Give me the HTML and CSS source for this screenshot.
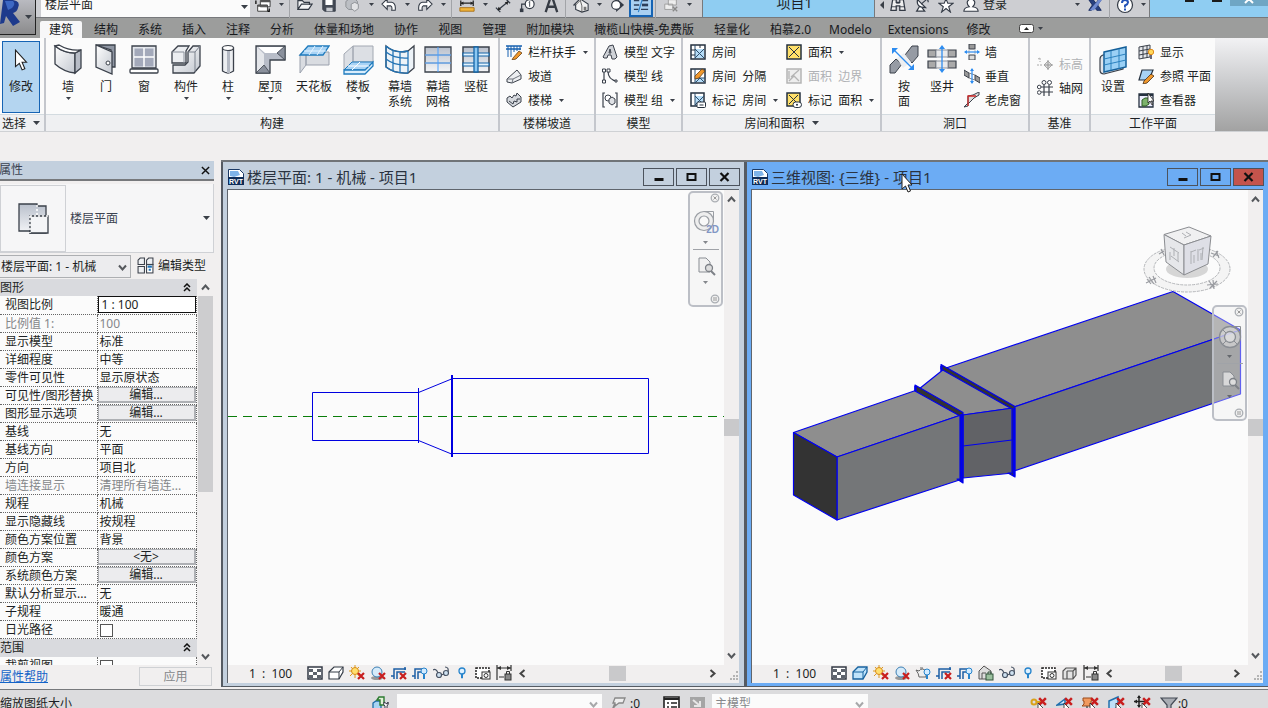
FILE: index.html
```html
<!DOCTYPE html>
<html lang="zh-CN">
<head>
<meta charset="utf-8">
<title>项目1</title>
<link rel="stylesheet" href="styles.css">
</head>
<body>
<svg class="defs" aria-hidden="true">
  <defs>
    <linearGradient id="gl" x1="0" y1="0" x2="1" y2="1"><stop offset="0" stop-color="#fff"/><stop offset="1" stop-color="#c3c8d0"/></linearGradient>
    <linearGradient id="gs" x1="0" y1="0" x2="0" y2="1"><stop offset="0" stop-color="#b9c0cc"/><stop offset="1" stop-color="#f4f5f7"/></linearGradient>
  </defs>
  <symbol id="dn" viewBox="0 0 7 4"><path d="M0 0h7L3.500 4z" fill="#3a3f47"/></symbol>
  <symbol id="chev" viewBox="0 0 9 9"><path d="M1 2.500l3.500 4 3.500-4" fill="none" stroke="#55585c" stroke-width="2"/></symbol>
  <symbol id="chevup" viewBox="0 0 9 9"><path d="M1 6.500l3.500-4 3.500 4" fill="none" stroke="#55585c" stroke-width="2"/></symbol>
  <symbol id="chevl" viewBox="0 0 9 9"><path d="M6.500 1l-4 3.500 4 3.500" fill="none" stroke="#444" stroke-width="2"/></symbol>
  <symbol id="chevr" viewBox="0 0 9 9"><path d="M2.500 1l4 3.500-4 3.500" fill="none" stroke="#444" stroke-width="2"/></symbol>
  <symbol id="dbl" viewBox="0 0 8 9"><path d="M1 4l3-3 3 3M1 8l3-3 3 3" fill="none" stroke="#111" stroke-width="1.500"/></symbol>
  <symbol id="ptr" viewBox="0 0 12 20"><path d="M1 1v15l3.500-3 2.500 6 2.500-1-2.500-6h4z" fill="#fff" stroke="#222" stroke-width="1"/></symbol>
  <symbol id="redx" viewBox="0 0 8 8"><path d="M1 1l6 6M7 1l-6 6" stroke="#c81e1e" stroke-width="2.200"/></symbol>

  <symbol id="b-wall" viewBox="0 0 32 32"><path d="M3 3q9 7 20 7v20q-11-1-20-9z" fill="url(#gl)" stroke="#3b414b" stroke-width="1.300"/><path d="M23 10l6-3v18l-6 5z" fill="#b7bcc6" stroke="#3b414b" stroke-width="1.300"/><path d="M3 3l4-1q10 6 22 5l-6 3Q12 10 3 3z" fill="#fff" stroke="#3b414b" stroke-width="1.300"/></symbol>
  <symbol id="b-door" viewBox="0 0 32 32"><path d="M6 2h19v22h-4V7z" fill="#8f96a3" stroke="#3b414b" stroke-width="1.300"/><path d="M6 2l16 7v22L6 24z" fill="url(#gl)" stroke="#3b414b" stroke-width="1.300"/><circle cx="18" cy="20" r="2" fill="#fff" stroke="#3b414b"/></symbol>
  <symbol id="b-window" viewBox="0 0 32 32"><path d="M4 3h24v22H4z" fill="#e4e7ec" stroke="#3b414b" stroke-width="1.300"/><path d="M6.500 5.500h19v18h-19z" fill="#a3a9ba"/><path d="M16 5v19M6 14h20" stroke="#fff" stroke-width="1.500"/><rect x="2" y="26" width="28" height="4" rx="1" fill="#fff" stroke="#3b414b" stroke-width="1.300"/></symbol>
  <symbol id="b-comp" viewBox="0 0 32 32"><path d="M2 9l6-6h11l-3 5v12H2z" fill="#eceef1" stroke="#3b414b" stroke-width="1.300"/><path d="M2 9h12v11" fill="none" stroke="#8a909a"/><path d="M3 22h12l3-3V9l5-6h7v20l-6 7H3z" fill="url(#gl)" stroke="#3b414b" stroke-width="1.300"/><path d="M18 9h7l5-6M25 9v20" fill="none" stroke="#7b818c"/></symbol>
  <symbol id="b-column" viewBox="0 0 32 32"><path d="M10.500 5v23q5.500 4 11 0V5z" fill="#eceef1" stroke="#3b414b" stroke-width="1.300"/><path d="M15 7h3v23h-3z" fill="#b4b9c3"/><ellipse cx="16" cy="5" rx="5.500" ry="2.500" fill="#fff" stroke="#3b414b" stroke-width="1.200"/></symbol>
  <symbol id="b-roof" viewBox="0 0 32 32"><path d="M2 3h29v14H16v13H2z" fill="#b8bdc8" stroke="#3b414b" stroke-width="1.300"/><path d="M3 4l7 7v12l-7 6z" fill="#e4e6ea"/><path d="M4 4l7 6h13l6-6z" fill="#fff"/><path d="M23 10l8-7v14zM10 22l6 8H2z" fill="#8a909c" stroke="#3b414b" stroke-width=".8"/></symbol>
  <symbol id="b-ceil" viewBox="0 0 32 32"><path d="M2 11v19l6-8V11zM8 9h23v13H8z" fill="#d9dce1" stroke="#9aa1ad"/><path d="M10 3h21l-6 9H2z" fill="#a8d3f5" stroke="#1f7bbd" stroke-width="1.300"/><path d="M6 8h22M17 3l-6 9M25 3l-6 9" fill="none" stroke="#e6f4ff"/></symbol>
  <symbol id="b-floor" viewBox="0 0 32 32"><path d="M2 11l9-8v16l-9 8zM11 3h20v16H11z" fill="#dcdfe4" stroke="#a2a8b2"/><path d="M10 19h21l-8 8H2z" fill="#a8d3f5" stroke="#1f7bbd"/><path d="M2 27h21l8-8v4l-8 8H2z" fill="#d9edfc" stroke="#1f7bbd" stroke-width="1.300"/><path d="M6 23h21M18 19l-8 8" stroke="#fff"/></symbol>
  <symbol id="b-csys" viewBox="0 0 32 32"><path d="M2 3q9 8 22 5l6-5v22l-6 5Q11 31 2 24z" fill="#edf3f8" stroke="#3b414b" stroke-width="1.300"/><path d="M2 9q9 7 22 6M2 16q9 7 22 6M9 7v21M16 8v21M24 8v22M2 3v21q9 7 22 6M2 3q9 8 22 5" fill="none" stroke="#2273b5" stroke-width="1.300"/></symbol>
  <symbol id="b-cgrid" viewBox="0 0 32 32"><path d="M3 4h26v25H3z" fill="url(#gs)" stroke="#3b414b" stroke-width="1.300"/><path d="M3 12h26M3 20h26" stroke="#8a909a"/><path d="M16 4v25M3 20h26M3 12h26" stroke="#4ba0ff"/></symbol>
  <symbol id="b-mull" viewBox="0 0 32 32"><path d="M3 4h26v25H3z" fill="url(#gs)" stroke="#3b414b" stroke-width="1.500"/><path d="M3 10h26v3H3zM3 20h26v3H3z" fill="#e4f3fd" stroke="#1465a8" stroke-width="1.200"/><path d="M14 4h4v25h-4z" fill="#8cc8f2" stroke="#1465a8" stroke-width="1.300"/></symbol>
  <symbol id="b-face" viewBox="0 0 32 32"><path d="M2 22l6-6 6 5-7 9H2zM17 12l7-9h6v10l-6 7z" fill="#969ba4" stroke="#3b414b"/><path d="M9 15l7-5 7 9-8 6z" fill="#eeeff1"/><path d="M6 7l18 18" stroke="#2d8cf0" stroke-width="1.300"/><path d="M4 5h6l-6 6zM26 27h-6l6-6z" fill="#2d8cf0"/></symbol>
  <symbol id="b-shaft" viewBox="0 0 32 32"><path d="M2 7h8v7H2zM22 7h8v7h-8zM2 18h8v7H2zM22 18h8v7h-8z" fill="#aaa" stroke="#3b414b" stroke-width="1.200"/><path d="M10 7h12v7H10zM10 18h12v7H10z" fill="#e9eaec" stroke="#8d939d"/><path d="M16 4v24" stroke="#2d8cf0" stroke-width="1.300"/><path d="M13 6l3-4 3 4zM13 26l3 4 3-4z" fill="#2d8cf0"/></symbol>
  <symbol id="b-set" viewBox="0 0 32 32"><path d="M3 16q0-3 3-4l20-4v18L7 31q-4 0-4-4z" fill="#e2e5ea" stroke="#3b414b" stroke-width="1.200"/><path d="M7 9l22-5v20L7 29z" fill="#9ad0f5" stroke="#145f99" stroke-width="1.500"/><path d="M14 8v19M22 6v20M7 16l22-5M7 22l22-5" stroke="#2b82bf"/></symbol>

  <symbol id="s-rail" viewBox="0 0 16 16"><path d="M0 2h16M0 5h15" stroke="#1761b0" stroke-width="1.300"/><path d="M2 2v11M5 2v11M8 2v6M11 2v5M14 2v4" stroke="#1761b0"/><path d="M7 14l6-7 3 2-6 6-4 1z" fill="#f0982c" stroke="#664018" stroke-width=".8"/></symbol>
  <symbol id="s-ramp" viewBox="0 0 16 16"><path d="M1 11l10-9 4 5v4l-9 4-5-1z" fill="#eceef1" stroke="#3b414b"/><path d="M6 15l1-4 8-4M1 11h6" fill="none" stroke="#70757e"/></symbol>
  <symbol id="s-stair" viewBox="0 0 16 16"><path d="M1 6l3-2 2 2 2-3 2 1 1-3 4 4v5l-8 5-6-5z" fill="#d5d8dd" stroke="#3b414b"/><path d="M3 9l4 3 1-3 3 1V7h3" fill="none" stroke="#3b414b"/></symbol>
  <symbol id="s-mtext" viewBox="0 0 16 16"><path d="M1 13L7 2l4-1 4 12-2 2h-3l-1-4H6l-1 3H2zM7 9h2L8 5z" fill="#cfd2d7" stroke="#3b414b"/></symbol>
  <symbol id="s-mline" viewBox="0 0 16 16"><path d="M2 3v11M6 3q0 9 9 10" fill="none" stroke="#3b414b" stroke-width="1.200"/><path d="M.5 1h3v3h-3zM.5 12h3v3h-3zM5 1h3v3H5zM13 12h2v2h-2z" fill="#fff" stroke="#3b414b"/></symbol>
  <symbol id="s-mgroup" viewBox="0 0 16 16"><path d="M3 1H1v14h2M13 1h2v14h-2" fill="none" stroke="#3b414b" stroke-width="1.200"/><circle cx="6" cy="6" r="3" fill="#fff" stroke="#3b414b"/><path d="M7 7l3-2 3 2v4l-3 2-3-2z" fill="#dfe1e5" stroke="#3b414b"/></symbol>
  <symbol id="s-room" viewBox="0 0 16 16"><path d="M1 1h14v14H1z" fill="#fff" stroke="#25313f" stroke-width="1.500"/><path d="M5 5h9v9H5z" fill="#b5dcf7"/><path d="M5 5l9 9M14 5l-9 9M5 1v14" stroke="#2f4f6d"/><path d="M1 6h4M1 11h4M10 1v3" stroke="#25313f"/></symbol>
  <symbol id="s-roomsep" viewBox="0 0 16 16"><path d="M1 1h14v14H1z" fill="#fff" stroke="#25313f" stroke-width="1.500"/><path d="M5 10h9v4H5z" fill="#b5dcf7"/><path d="M5 1v14M5 10h10M5 15l5-5 5 5" stroke="#2f4f6d" fill="none"/><path d="M5 8l7-7 3 2-6 7-4 1z" fill="#f0982c" stroke="#664018" stroke-width=".8"/></symbol>
  <symbol id="s-roomtag" viewBox="0 0 16 16"><path d="M1 1h13v13H1z" fill="#fff" stroke="#25313f" stroke-width="1.500"/><path d="M5 4h8v9H5z" fill="#b5dcf7"/><path d="M5 4l9 9M14 4l-9 9M5 1v13" stroke="#2f4f6d"/><rect x="7" y="10" width="8.500" height="5.500" rx="1" fill="#fff" stroke="#25313f"/><path d="M9.500 13h4" stroke="#25313f"/></symbol>
  <symbol id="s-area" viewBox="0 0 16 16"><path d="M1 1h14v14H1z" fill="#ffe069" stroke="#25313f" stroke-width="1.500"/><path d="M3 3l10 10M13 3L3 13" stroke="#25313f"/></symbol>
  <symbol id="s-areab" viewBox="0 0 16 16"><path d="M1 1h14v14H1z" fill="#eee" stroke="#b5b5b5" stroke-width="1.500"/><path d="M3 13l5-5 5 5M5 9l8-7M3 3v8" fill="none" stroke="#b5b5b5" stroke-width="1.300"/></symbol>
  <symbol id="s-areatag" viewBox="0 0 16 16"><path d="M1 1h13v13H1z" fill="#ffe069" stroke="#25313f" stroke-width="1.500"/><path d="M3 3l9 9M12 3l-9 9" stroke="#25313f"/><rect x="7" y="10" width="8.500" height="5.500" rx="2.700" fill="#fff" stroke="#25313f"/><circle cx="11" cy="12.700" r="1" fill="#25313f"/></symbol>
  <symbol id="s-owall" viewBox="0 0 16 16"><path d="M5 0h6v5H5z" fill="#999" stroke="#3b414b"/><path d="M5 11h6v5H5z" fill="#ddd" stroke="#3b414b"/><path d="M5 5v6M11 5v6" stroke="#bbb"/><path d="M1 8h14" stroke="#2d8cf0" stroke-width="1.200"/><path d="M3 6L0 8l3 2zM13 6l3 2-3 2z" fill="#2d8cf0"/></symbol>
  <symbol id="s-overt" viewBox="0 0 16 16"><path d="M0 2l5 3v5L0 7zM11 7l5 3v5l-5-3z" fill="#999" stroke="#3b414b"/><path d="M5 5l6 2M5 10l6 2" stroke="#888"/><path d="M8 1v14" stroke="#2d8cf0" stroke-width="1.200"/><path d="M6 3l2-3 2 3zM6 13l2 3 2-3z" fill="#2d8cf0"/></symbol>
  <symbol id="s-dormer" viewBox="0 0 16 16"><path d="M0 15l4-4V4l5-1 6-3v3l-5 3-6 6v2z" fill="#ddd" stroke="#3b414b"/><path d="M4 14V4h8" fill="none" stroke="#d02a2a" stroke-width="1.300"/></symbol>
  <symbol id="s-level" viewBox="0 0 16 16"><path d="M0 9h6M3 2v4M1 3l2-1" fill="none" stroke="#aaa" stroke-dasharray="2 1"/><path d="M7 9l4-4 4 4-4 4z" fill="#ddd" stroke="#aaa"/><path d="M11 4v10M7 9h9" stroke="#999"/></symbol>
  <symbol id="s-grid" viewBox="0 0 16 16"><path d="M4 7h12M4 12h12M7 5v11M12 5v11" stroke="#3b414b" stroke-width="1.200"/><circle cx="7" cy="2.500" r="2" fill="#fff" stroke="#3b414b"/><circle cx="12.500" cy="2.500" r="2" fill="#fff" stroke="#3b414b"/><circle cx="2.200" cy="7" r="1.800" fill="#fff" stroke="#3b414b"/><circle cx="2.200" cy="12.500" r="1.800" fill="#fff" stroke="#3b414b"/></symbol>
  <symbol id="s-show" viewBox="0 0 16 16"><path d="M1 3l11-2v12l-11 2zM5 2v12M9 2v12M1 7l11-2M1 11l11-2" fill="#e5e7ea" stroke="#3b414b"/><circle cx="13" cy="8" r="2.700" fill="#ffd85a" stroke="#e08a1c"/><path d="M12 11h2v4h-2z" fill="#667"/></symbol>
  <symbol id="s-ref" viewBox="0 0 16 16"><path d="M4 2h11l-4 10H1z" fill="#a8d3f5" stroke="#25313f" stroke-width="1.200"/><path d="M6 13l7-7 3 2-7 7-4 1z" fill="#f0982c" stroke="#4a3018" stroke-width=".8"/></symbol>
  <symbol id="s-viewer" viewBox="0 0 16 16"><path d="M1 2h14v13H1z" fill="#eef" stroke="#25313f" stroke-width="1.300"/><path d="M1 2h14v2H1z" fill="#25313f"/><path d="M4 8l3-2h4v6l-3 2H4z" fill="#7cb36b" stroke="#2e5d24"/><path d="M10 1v10l2-2 2 4 1-1-2-3h3z" fill="#fff" stroke="#222" stroke-width=".8"/></symbol>

  <symbol id="q-win" viewBox="0 0 18 18"><path d="M6 4h11v7H6zM3 9h11v7H3z" fill="#fff" stroke="#333"/><path d="M6 4h11v2H6zM3 9h11v2H3z" fill="#555"/><path d="M1 4v4M16 13v3h-2" stroke="#111" stroke-width="1.500" fill="none"/></symbol>
  <symbol id="q-open" viewBox="0 0 18 18"><path d="M1 14V4h5l2 2h6v3M1 14l4-6h12l-4 6z" fill="#f3f4f6" stroke="#333a45" stroke-width="1.300"/></symbol>
  <symbol id="q-save" viewBox="0 0 18 18"><path d="M2 2h14v14H4l-2-2z" fill="#454b56" stroke="#333a45"/><path d="M5 2h8v7H5z" fill="#fff"/><path d="M6 12h7v4H6z" fill="#c9ccd2"/></symbol>
  <symbol id="q-sync" viewBox="0 0 18 18"><path d="M1 5l4-3h6l3 3v6l-4 3H4l-3-3z" fill="#bcbfc4" stroke="#8a8d92"/><path d="M7 8l4-2 4 2v5l-4 3-4-3z" fill="#e2e3e5" stroke="#8a8d92"/></symbol>
  <symbol id="q-undo" viewBox="0 0 18 18"><path d="M1 8l6-6v4h5q5 1 4 9h-4q1-4-1-5H7v4z" fill="#fff" stroke="#333a45" stroke-width="1.200"/></symbol>
  <symbol id="q-redo" viewBox="0 0 18 18"><path d="M17 8l-6-6v4H6q-5 1-4 9h4q-1-4 1-5h4v4z" fill="#fff" stroke="#333a45" stroke-width="1.200"/></symbol>
  <symbol id="q-meas" viewBox="0 0 18 18"><path d="M2 7h14M2 4v6M16 4v6" stroke="#222" stroke-width="1.400"/><path d="M2 7l3-2v4zM16 7l-3-2v4z" fill="#222"/><path d="M1 12h16v4H1z" fill="#f2b53b" stroke="#a86e13"/></symbol>
  <symbol id="q-dim" viewBox="0 0 18 18"><path d="M3 15L15 5M1 12l5 5M12 2l5 5" stroke="#333a45" stroke-width="1.400"/><path d="M3 15l1-4 3 3zM15 5l-4 1 3 3z" fill="#222"/></symbol>
  <symbol id="q-tag" viewBox="0 0 18 18"><path d="M7 8H3v6" fill="none" stroke="#333a45" stroke-width="1.300"/><path d="M1 13h4v4H1z" fill="#333a45"/><circle cx="12" cy="8" r="5" fill="#fff" stroke="#333a45" stroke-width="1.300"/><path d="M11 6l1-1v6" fill="none" stroke="#333a45"/></symbol>
  <symbol id="q-a" viewBox="0 0 18 18"><path d="M3 17L8 2h3l5 15M6 11h7" fill="none" stroke="#363b44" stroke-width="2.600"/></symbol>
  <symbol id="q-home" viewBox="0 0 18 18"><path d="M1 9l7-7 9 6v7l-7 2-7-3V9z" fill="#f1f1f1" stroke="#333a45" stroke-width="1.200"/><path d="M8 3l2 7v7M3 9l5-5" stroke="#555" fill="none"/><path d="M12 11h3v4h-3z" fill="#777"/></symbol>
  <symbol id="q-sec" viewBox="0 0 18 18"><path d="M8 1l9 8-9 8z" fill="#333a45"/><circle cx="8" cy="9" r="5" fill="#fff" stroke="#333a45" stroke-width="1.300"/></symbol>
  <symbol id="q-thin" viewBox="0 0 18 18"><path d="M1 4h6M10 4h7M1 9h6M1 14h5M9 14h8" stroke="#2c3e5a" stroke-width="1.500"/><path d="M11 1L6 17" stroke="#2f82c9" stroke-width="1.300"/><path d="M10 9h7" stroke="#2c3e5a" stroke-width="3"/></symbol>
  <symbol id="q-sw" viewBox="0 0 18 18"><path d="M6 3h9v6H6zM2 8h9v6H2z" fill="#eee" stroke="#999"/><path d="M11 11l5 5M16 11l-5 5" stroke="#888" stroke-width="1.500"/></symbol>
  <symbol id="q-bin" viewBox="0 0 18 18"><path d="M3 3h4v3h4V3h4l2 12h-6v-5H7v5H1z" fill="#f0f0f0" stroke="#333a45" stroke-width="1.400"/><path d="M7 7h4M2 11h5M11 11h5" stroke="#333a45"/></symbol>
  <symbol id="q-sat" viewBox="0 0 18 18"><path d="M4 3q-2 9 9 9zM6 11l-3 5h9l-3-4" fill="#fff" stroke="#333a45" stroke-width="1.400"/><path d="M8 8l6-5M12 1q4 1 4 5" fill="none" stroke="#333a45" stroke-width="1.300"/></symbol>
  <symbol id="q-star" viewBox="0 0 18 18"><path d="M9 2l2 5h6l-5 4 2 6-5-4-5 4 2-6-5-4h6z" fill="#fff" stroke="#333a45" stroke-width="1.200"/></symbol>
  <symbol id="q-user" viewBox="0 0 18 18"><path d="M1 16q0-4 6-5-3-3-2-6 4-6 8 0 1 3-2 6 6 1 6 5z" fill="#fff" stroke="#333a45" stroke-width="1.300"/></symbol>
  <symbol id="q-x" viewBox="0 0 18 18"><path d="M2 3h5l3 4 3-4h3l-4 6 4 6h-5l-3-4-3 4H2l4-6z" fill="#27407f" stroke="#13265c"/><path d="M13 3h4L8 15H3z" fill="#6f8ad0"/></symbol>
  <symbol id="q-help" viewBox="0 0 18 18"><circle cx="9" cy="9" r="7.500" fill="#fff" stroke="#333a45" stroke-width="1.200"/><path d="M6 7q0-3 3-3t3 2.500q0 1.500-3 3v2M9 12.500v2" fill="none" stroke="#2454b8" stroke-width="2"/></symbol>

  <symbol id="v-detail" viewBox="0 0 16 16"><path d="M1 2h14v12H1z" fill="#fff" stroke="#333a45" stroke-width="1.500"/><path d="M2 4h4v3H2zM10 4h4v3h-4zM6 7h4v3H6zM2 10h4v3H2zM10 10h4v3h-4z" fill="#5c626c"/></symbol>
  <symbol id="v-box" viewBox="0 0 16 16"><path d="M1 7l5-5h9v5l-4 7H1z" fill="#fff" stroke="#333a45" stroke-width="1.200"/><path d="M1 7h10v7M11 7l4-5" fill="none" stroke="#333a45"/></symbol>
  <symbol id="v-boxb" viewBox="0 0 16 16"><path d="M1 7l5-5h9v5l-4 7H1z" fill="#bfe3fb" stroke="#17629e" stroke-width="1.300"/><path d="M1 7h10v7M11 7l4-5" fill="none" stroke="#17629e"/></symbol>
  <symbol id="v-sun" viewBox="0 0 16 16"><path d="M6 0v13M0 6h12M2 2l8 9M10 2l-9 9" stroke="#dd9a1f"/><circle cx="6" cy="6" r="3.500" fill="#ffdf6e" stroke="#d98c1a"/><use href="#redx" x="8" y="7" width="8" height="8"/></symbol>
  <symbol id="v-shadow" viewBox="0 0 16 16"><ellipse cx="7" cy="13" rx="6" ry="2" fill="#999"/><circle cx="7" cy="7" r="5" fill="#d6ebfa" stroke="#3d7fb3"/><use href="#redx" x="8" y="7" width="8" height="8"/></symbol>
  <symbol id="v-render" viewBox="0 0 16 16"><path d="M1 5l3 1q3-4 7 0v6H4Q4 9 1 5M5 3h3" fill="#eee" stroke="#666"/><circle cx="12" cy="7" r="3" fill="#d3ebff" stroke="#2784cc"/><path d="M12 10v4" stroke="#2784cc" stroke-width="2"/></symbol>
  <symbol id="v-crop" viewBox="0 0 16 16"><path d="M3 14V4h12M0 11h3M6 14V7h8M14 2v3" fill="none" stroke="#1c5fa5" stroke-width="1.500"/><use href="#redx" x="8" y="7" width="8" height="8"/></symbol>
  <symbol id="v-crops" viewBox="0 0 16 16"><path d="M3 14V4h8M0 11h3M6 14V7h3" fill="none" stroke="#1c5fa5" stroke-width="1.500"/><circle cx="12" cy="6" r="3" fill="#d3ebff" stroke="#2784cc"/><path d="M12 9v5" stroke="#2784cc" stroke-width="2"/></symbol>
  <symbol id="v-lock" viewBox="0 0 16 16"><path d="M1 14V6l5-5 7 5v8z" fill="#ddd" stroke="#555"/><path d="M4 14V8h4" fill="none" stroke="#555"/><rect x="8" y="9" width="7" height="6" fill="#9bc09e" stroke="#30523a"/><path d="M10 9V7h3v2" fill="none" stroke="#30523a"/></symbol>
  <symbol id="v-glass" viewBox="0 0 16 16"><path d="M0 5q3-2 5 3M12 2q4 0 3 5M8 10l3-1" fill="none" stroke="#475263" stroke-width="1.200"/><circle cx="6" cy="10" r="2.500" fill="#cfe1f0" stroke="#475263" stroke-width="1.200"/><circle cx="13" cy="8" r="2.500" fill="#cfe1f0" stroke="#475263" stroke-width="1.200"/></symbol>
  <symbol id="v-bulb" viewBox="0 0 16 16"><circle cx="8" cy="6" r="3" fill="#dff1ff" stroke="#2784cc" stroke-width="1.300"/><path d="M7.500 9h1v4h-1z" fill="#8bc0e8" stroke="#2784cc"/></symbol>
  <symbol id="v-temp" viewBox="0 0 16 16"><rect x="1" y="3" width="13" height="10" fill="#fff" stroke="#222" stroke-width="1.500" stroke-dasharray="2 1"/><rect x="7" y="7" width="8" height="7" fill="#fff" stroke="#333"/><circle cx="11" cy="10.500" r="2" fill="none" stroke="#333"/></symbol>
  <symbol id="v-disp" viewBox="0 0 16 16"><path d="M1 6l3-3h10v7l-3 4H1zM5 6h6v8M11 6l3-3M5 6v8" fill="#e3e3e3" stroke="#555" stroke-width="1.200"/></symbol>
  <symbol id="v-cons" viewBox="0 0 16 16"><path d="M1 0v15M15 0v6M1 3h14M3 12h5" stroke="#333" stroke-width="1.200" fill="none"/><path d="M1 3l4-2v4zM15 3l-4-2v4z" fill="#333"/><rect x="9" y="9" width="6" height="6" fill="#888" stroke="#333"/><path d="M10.500 9V6.500h3V9" fill="none" stroke="#333"/></symbol>
  <symbol id="rvt" viewBox="0 0 16 16"><path d="M.5 .5h11l4 4v11H.5z" fill="#fff" stroke="#1b3a66"/><path d="M2 2h8l2 4-6 2-4-1z" fill="#7fb3e8"/><path d="M0 8h16v8H0z" fill="#0f2c57"/><text x="8" y="15" text-anchor="middle" class="rvt-text">RVT</text></symbol>
  <symbol id="n-zoom" viewBox="0 0 20 20"><path d="M3 2h7l4 4v10H3z" fill="#eee" fill-opacity=".7" stroke="#898d93"/><circle cx="13" cy="12" r="3.500" fill="#ddd" stroke="#7d8187" stroke-width="1.300"/><path d="M15 15l4 4" stroke="#7d8187" stroke-width="2"/></symbol>
  <symbol id="n-wheel" viewBox="0 0 26 26"><circle cx="13" cy="13" r="10.500" fill="#ddd" fill-opacity=".6" stroke="#898d93" stroke-width="1.300"/><path d="M14 2.500h9.500V13" fill="none" stroke="#898d93"/><circle cx="13" cy="13" r="5.500" fill="#eee" fill-opacity=".5" stroke="#898d93" stroke-width="1.300"/><path d="M6 20l3-3M20 20l-3-3M6 6l3 3" stroke="#898d93"/></symbol>
  <symbol id="n-close" viewBox="0 0 10 10"><circle cx="5" cy="5" r="3.800" fill="#eee" fill-opacity=".6" stroke="#aaaeb3" stroke-width="1.300"/><path d="M3.500 3.500l3 3M6.500 3.500l-3 3" stroke="#999"/></symbol>
  <symbol id="n-opt" viewBox="0 0 10 10"><circle cx="5" cy="5" r="3.800" fill="#eee" fill-opacity=".6" stroke="#aaaeb3" stroke-width="1.300"/><path d="M3 4h4M3 6h4" stroke="#999"/></symbol>
  <symbol id="grip" viewBox="0 0 10 10"><path d="M7 0h2v2H7zM4 4h2v2H4zM7 4h2v2H7zM1 7h2v2H1zM4 7h2v2H4zM7 7h2v2H7z" fill="#b4b4b4"/></symbol>

  <symbol id="t-ws" viewBox="0 0 18 18"><path d="M1 8l3-2h5v8l-2 2H1z" fill="#a7d4f4" stroke="#1c6ca8" stroke-width="1.300"/><path d="M5 5l2-3h5v8H8V5z" fill="#e3f0d9" stroke="#2c7b31" stroke-width="1.400"/><path d="M12 7q-1 3 1 4v5h2v-5q2-2 1-4l-1 2z" fill="#fff" stroke="#334"/></symbol>
  <symbol id="t-req" viewBox="0 0 18 18"><path d="M5 3h10l-2 5H9l-4 3V8H3z" fill="#eee" stroke="#888" stroke-width="1.300"/><path d="M5 9l-3 7" stroke="#888" stroke-width="2"/></symbol>
  <symbol id="t-opt" viewBox="0 0 18 18"><path d="M1 2h15v14H1z" fill="#fff" stroke="#222" stroke-width="1.600"/><path d="M1 4h15" stroke="#222" stroke-width="2"/><path d="M4 8h2M8 8h6M4 12h2M8 12h6" stroke="#222" stroke-width="1.500"/></symbol>
  <symbol id="t-add" viewBox="0 0 18 18"><path d="M1 2h15v14H1z" fill="#a5a5a5"/><path d="M4 5l6 5M5 11h6V6" stroke="#e6e6e6" stroke-width="2" fill="none"/></symbol>
  <symbol id="t-link" viewBox="0 0 18 18"><circle cx="4" cy="7" r="2.500" fill="none" stroke="#d9a21b" stroke-width="2"/><path d="M6 7h8" stroke="#d9a21b" stroke-width="2"/><use href="#redx" x="8" y="2" width="9" height="9"/><path d="M8 8v8l2-1 1 3 2-1-1-3h2z" fill="#fff" stroke="#222" stroke-width=".8"/></symbol>
  <symbol id="t-under" viewBox="0 0 18 18"><path d="M1 10l8-6v5zM1 15h11" fill="#d3ebff" stroke="#2070ad" stroke-width="1.500"/><use href="#redx" x="8" y="2" width="9" height="9"/><path d="M8 8v8l2-1 1 3 2-1-1-3h2z" fill="#fff" stroke="#222" stroke-width=".8"/></symbol>
  <symbol id="t-pin" viewBox="0 0 18 18"><path d="M1 3h9v3H9v3l2 2H0l2-2V6H1z" fill="#f19a5e" stroke="#9c4a1a"/><path d="M5 11v5" stroke="#555" stroke-width="1.500"/><use href="#redx" x="8" y="2" width="9" height="9"/><path d="M8 8v8l2-1 1 3 2-1-1-3h2z" fill="#fff" stroke="#222" stroke-width=".8"/></symbol>
  <symbol id="t-face" viewBox="0 0 18 18"><path d="M1 6l9-4v10l-7 4H1z" fill="#bfe0f8" stroke="#2070ad" stroke-width="1.500"/><use href="#redx" x="8" y="2" width="9" height="9"/><path d="M8 8v8l2-1 1 3 2-1-1-3h2z" fill="#fff" stroke="#222" stroke-width=".8"/></symbol>
  <symbol id="t-drag" viewBox="0 0 18 18"><path d="M5 1v11M0 6.500h11" stroke="#222" stroke-width="1.500"/><path d="M5 0l2 3H3zM5 13l2-3H3zM0 6.500l3-2v4z" fill="#222"/><use href="#redx" x="8" y="2" width="9" height="9"/><path d="M8 8v8l2-1 1 3 2-1-1-3h2z" fill="#fff" stroke="#222" stroke-width=".8"/></symbol>
  <symbol id="t-filter" viewBox="0 0 18 18"><path d="M1 3h16l-6 7v7H7v-7z" fill="#a9adb4" stroke="#444a55" stroke-width="1.200"/></symbol>
</svg>

<header class="top">
  <button class="app" aria-label="R"><svg class="app-r" viewBox="0 0 24 26"><path d="M3 0h10q8 1 5 8-1 4-5 5l7 9-7 4-7-10-2 7-4 1z" fill="#1d3a8c"/><path d="M5 1h8q3 3-1 7l-4 2z" fill="#3d68c4"/></svg><svg class="arrow"><use href="#dn"/></svg></button>
  <div class="titlebar">
    <div class="combo type-combo"><select aria-label="类型"><option>楼层平面</option></select><svg class="arrow"><use href="#dn"/></svg></div>
    <div class="qat">
      <button class="q"><svg><use href="#q-win"/></svg></button><button class="qa"><svg class="arrow"><use href="#dn"/></svg></button><i class="sep"></i>
      <button class="q"><svg><use href="#q-open"/></svg></button><button class="q"><svg><use href="#q-save"/></svg></button><button class="q"><svg><use href="#q-sync"/></svg></button><button class="qa"><svg class="arrow"><use href="#dn"/></svg></button>
      <button class="q"><svg><use href="#q-undo"/></svg></button><button class="qa"><svg class="arrow"><use href="#dn"/></svg></button>
      <button class="q"><svg><use href="#q-redo"/></svg></button><button class="qa"><svg class="arrow"><use href="#dn"/></svg></button><i class="sep"></i>
      <button class="q"><svg><use href="#q-meas"/></svg></button><button class="qa"><svg class="arrow"><use href="#dn"/></svg></button>
      <button class="q"><svg><use href="#q-dim"/></svg></button><button class="q"><svg><use href="#q-tag"/></svg></button><button class="q"><svg><use href="#q-a"/></svg></button><i class="sep"></i>
      <button class="q"><svg><use href="#q-home"/></svg></button><button class="qa"><svg class="arrow"><use href="#dn"/></svg></button>
      <button class="q"><svg><use href="#q-sec"/></svg></button><button class="q on"><svg><use href="#q-thin"/></svg></button><i class="sep"></i>
      <button class="q"><svg><use href="#q-sw"/></svg></button><button class="qa"><svg class="arrow"><use href="#dn"/></svg></button>
    </div>
    <div class="doc-title">项目1</div>
    <div class="info">
      <svg class="back" viewBox="0 0 4 8"><path d="M4 0v8L0 4z" fill="#3a3f47"/></svg>
      <button class="q"><svg><use href="#q-bin"/></svg></button><button class="q"><svg><use href="#q-sat"/></svg></button><button class="q"><svg><use href="#q-star"/></svg></button>
      <button class="login"><svg><use href="#q-user"/></svg>登录</button>
      <button class="qa push"><svg class="arrow"><use href="#dn"/></svg></button>
      <button class="q"><svg><use href="#q-x"/></svg></button><i class="sep"></i><button class="q help"><svg><use href="#q-help"/></svg></button><button class="qa"><svg class="arrow"><use href="#dn"/></svg></button>
    </div>
    <div class="sys">
      <button aria-label="最小化"><svg viewBox="0 0 10 10"><path d="M0 5h9v3H0z" fill="#1a1a1a"/></svg></button>
      <button aria-label="最大化"><svg viewBox="0 0 10 10"><path d="M1 1h8v6H1z" fill="none" stroke="#1a1a1a" stroke-width="2"/></svg></button>
      <button aria-label="关闭" class="sys-close"><svg viewBox="0 0 10 10"><path d="M1 1l8 8M9 1L1 9" stroke="#fff" stroke-width="2"/></svg></button>
    </div>
  </div>
  <nav class="tabs">
    <button class="tab active">建筑</button><button class="tab">结构</button><button class="tab">系统</button><button class="tab">插入</button><button class="tab">注释</button><button class="tab">分析</button><button class="tab">体量和场地</button><button class="tab">协作</button><button class="tab">视图</button><button class="tab">管理</button><button class="tab">附加模块</button><button class="tab">橄榄山快模-免费版</button><button class="tab">轻量化</button><button class="tab">柏慕2.0</button><button class="tab latin">Modelo</button><button class="tab latin">Extensions</button><button class="tab">修改</button>
    <button class="collapse"><svg class="pill" viewBox="0 0 15 9"><rect x=".5" y=".5" width="14" height="8" rx="2" fill="#fff" stroke="#444"/><path d="M5 6h5L7.500 3z" fill="#222"/></svg><svg class="arrow"><use href="#dn"/></svg></button>
  </nav>
</header>

<section class="ribbon">
  <div class="panel p-select">
    <div class="panel-body"><button class="big modify"><svg class="modify-ptr"><use href="#ptr"/></svg><span>修改</span></button></div>
    <div class="panel-label">选择<svg class="arrow lg"><use href="#dn"/></svg></div>
  </div>
  <div class="panel p-build">
    <div class="panel-body">
      <button class="big w40"><svg><use href="#b-wall"/></svg><span>墙</span><svg class="arrow"><use href="#dn"/></svg></button>
      <button class="big w36"><svg><use href="#b-door"/></svg><span>门</span></button>
      <button class="big w40"><svg><use href="#b-window"/></svg><span>窗</span></button>
      <button class="big w44"><svg><use href="#b-comp"/></svg><span>构件</span><svg class="arrow"><use href="#dn"/></svg></button>
      <button class="big w40"><svg><use href="#b-column"/></svg><span>柱</span><svg class="arrow"><use href="#dn"/></svg></button>
      <button class="big w44"><svg><use href="#b-roof"/></svg><span>屋顶</span><svg class="arrow"><use href="#dn"/></svg></button>
      <button class="big w44"><svg><use href="#b-ceil"/></svg><span>天花板</span></button>
      <button class="big w44"><svg><use href="#b-floor"/></svg><span>楼板</span><svg class="arrow"><use href="#dn"/></svg></button>
      <button class="big w40"><svg><use href="#b-csys"/></svg><span>幕墙<br>系统</span></button>
      <button class="big w36"><svg><use href="#b-cgrid"/></svg><span>幕墙<br>网格</span></button>
      <button class="big w40"><svg><use href="#b-mull"/></svg><span>竖梃</span></button>
    </div>
    <div class="panel-label">构建</div>
  </div>
  <div class="panel p-stairs">
    <div class="panel-body"><div class="stack">
      <button class="small"><svg><use href="#s-rail"/></svg>栏杆扶手<svg class="arrow"><use href="#dn"/></svg></button>
      <button class="small"><svg><use href="#s-ramp"/></svg>坡道</button>
      <button class="small"><svg><use href="#s-stair"/></svg>楼梯<svg class="arrow"><use href="#dn"/></svg></button>
    </div></div>
    <div class="panel-label">楼梯坡道</div>
  </div>
  <div class="panel p-model">
    <div class="panel-body"><div class="stack">
      <button class="small"><svg><use href="#s-mtext"/></svg>模型 文字</button>
      <button class="small"><svg><use href="#s-mline"/></svg>模型 线</button>
      <button class="small"><svg><use href="#s-mgroup"/></svg>模型 组<svg class="arrow"><use href="#dn"/></svg></button>
    </div></div>
    <div class="panel-label">模型</div>
  </div>
  <div class="panel p-room">
    <div class="panel-body">
      <div class="stack half">
        <button class="small"><svg><use href="#s-room"/></svg>房间</button>
        <button class="small"><svg><use href="#s-roomsep"/></svg>房间&nbsp; 分隔</button>
        <button class="small"><svg><use href="#s-roomtag"/></svg>标记&nbsp; 房间<svg class="arrow"><use href="#dn"/></svg></button>
      </div>
      <div class="stack half">
        <button class="small"><svg><use href="#s-area"/></svg>面积<svg class="arrow"><use href="#dn"/></svg></button>
        <button class="small" disabled><svg><use href="#s-areab"/></svg>面积&nbsp; 边界</button>
        <button class="small"><svg><use href="#s-areatag"/></svg>标记&nbsp; 面积<svg class="arrow"><use href="#dn"/></svg></button>
      </div>
    </div>
    <div class="panel-label">房间和面积<svg class="arrow lg"><use href="#dn"/></svg></div>
  </div>
  <div class="panel p-open">
    <div class="panel-body">
      <button class="big w40"><svg><use href="#b-face"/></svg><span>按<br>面</span></button>
      <button class="big w36"><svg><use href="#b-shaft"/></svg><span>竖井</span></button>
      <div class="stack">
        <button class="small"><svg><use href="#s-owall"/></svg>墙</button>
        <button class="small"><svg><use href="#s-overt"/></svg>垂直</button>
        <button class="small"><svg><use href="#s-dormer"/></svg>老虎窗</button>
      </div>
    </div>
    <div class="panel-label">洞口</div>
  </div>
  <div class="panel p-datum">
    <div class="panel-body"><div class="stack mid">
      <button class="small" disabled><svg><use href="#s-level"/></svg>标高</button>
      <button class="small"><svg><use href="#s-grid"/></svg>轴网</button>
    </div></div>
    <div class="panel-label">基准</div>
  </div>
  <div class="panel p-plane">
    <div class="panel-body">
      <button class="big w40"><svg><use href="#b-set"/></svg><span>设置</span></button>
      <div class="stack">
        <button class="small"><svg><use href="#s-show"/></svg>显示</button>
        <button class="small"><svg><use href="#s-ref"/></svg>参照 平面</button>
        <button class="small"><svg><use href="#s-viewer"/></svg>查看器</button>
      </div>
    </div>
    <div class="panel-label">工作平面</div>
  </div>
</section>

<main class="work">
  <aside class="props">
    <div class="props-title"><span>属性</span><button aria-label="关闭"><svg viewBox="0 0 10 10"><path d="M1 1l8 8M9 1L1 9" stroke="#111" stroke-width="1.600"/></svg></button></div>
    <button class="type-sel">
      <span class="thumb"><svg viewBox="0 0 34 34"><path d="M3 3h18v2h9v27H14v-2H3z" fill="url(#gs)" stroke="#3b414b" stroke-width="1.300"/><path d="M14 15h18v17H14z" fill="#f4f5f7" stroke="#3b414b" stroke-width="1.300"/><path d="M14 15h18M14 15v17M21 4v11" fill="none" stroke="#fff" stroke-width="1.600" stroke-dasharray="2 2"/></svg></span>
      <span class="type-name">楼层平面</span><svg class="arrow lg"><use href="#dn"/></svg>
    </button>
    <div class="filter">
      <div class="combo"><select aria-label="属性过滤器"><option>楼层平面: 1 - 机械</option></select><svg class="chev"><use href="#chev"/></svg></div>
      <button class="edit-type"><svg viewBox="0 0 16 16"><path d="M1 3l2-2h4v6H1zM9 3l2-2h4v6H9zM1 9h6v6H1z" fill="#eef0f3" stroke="#3b414b"/><rect x="9" y="7" width="6" height="8" fill="#fff" stroke="#3b414b"/><path d="M10 9h4M11 12h2" stroke="#2273b5" stroke-width="2"/></svg>编辑类型</button>
    </div>
    <div class="list">
      <div class="list-view">
        <button class="cat">图形<svg><use href="#dbl"/></svg></button>
        <table class="grid">
          <tr><th><label for="scale">视图比例</label></th><td class="tight"><input id="scale" class="scale" type="text" value="1 : 100"></td></tr>
          <tr class="dim"><th>比例值 1:</th><td>100</td></tr>
          <tr><th>显示模型</th><td>标准</td></tr>
          <tr><th>详细程度</th><td>中等</td></tr>
          <tr><th>零件可见性</th><td>显示原状态</td></tr>
          <tr><th>可见性/图形替换</th><td class="tight"><button class="cell-btn">编辑...</button></td></tr>
          <tr><th>图形显示选项</th><td class="tight"><button class="cell-btn">编辑...</button></td></tr>
          <tr><th>基线</th><td>无</td></tr>
          <tr><th>基线方向</th><td>平面</td></tr>
          <tr><th>方向</th><td>项目北</td></tr>
          <tr class="dim"><th>墙连接显示</th><td>清理所有墙连...</td></tr>
          <tr><th>规程</th><td>机械</td></tr>
          <tr><th>显示隐藏线</th><td>按规程</td></tr>
          <tr><th>颜色方案位置</th><td>背景</td></tr>
          <tr><th>颜色方案</th><td class="tight"><button class="cell-btn">&lt;无&gt;</button></td></tr>
          <tr><th>系统颜色方案</th><td class="tight"><button class="cell-btn">编辑...</button></td></tr>
          <tr><th>默认分析显示...</th><td>无</td></tr>
          <tr><th>子规程</th><td>暖通</td></tr>
          <tr><th><label for="sunpath">日光路径</label></th><td><input id="sunpath" type="checkbox"></td></tr>
        </table>
        <button class="cat">范围<svg><use href="#dbl"/></svg></button>
        <table class="grid"><tr><th><label for="cropview">裁剪视图</label></th><td><input id="cropview" type="checkbox"></td></tr></table>
      </div>
      <div class="vbar"><svg class="chev"><use href="#chevup"/></svg><i class="prop-thumb"></i><svg class="chev"><use href="#chev"/></svg></div>
    </div>
    <div class="props-foot"><a href="#">属性帮助</a><button disabled>应用</button></div>
  </aside>

  <div class="mdi">
    <section class="win">
      <div class="win-title"><svg class="win-icon"><use href="#rvt"/></svg><h2>楼层平面: 1 - 机械 - 项目1</h2>
        <button aria-label="最小化"><svg viewBox="0 0 10 10"><path d="M1 6h9v3H1z" fill="#111"/></svg></button><button aria-label="最大化"><svg viewBox="0 0 10 10"><path d="M1 2h8v6H1z" fill="none" stroke="#111" stroke-width="2"/></svg></button><button aria-label="关闭"><svg viewBox="0 0 10 10"><path d="M1 1l8 8M9 1L1 9" stroke="#111" stroke-width="2.200"/></svg></button></div>
      <div class="client">
        <div class="view">
          <div class="canvas">
            <svg class="draw" viewBox="228 190 496 475"><path d="M228 416.500h496" stroke="#0a7d0a" stroke-dasharray="9 6"/>
              <g fill="none" stroke="#0000e0"><path d="M418.500 392.500h-106v48h106M418.500 388v55M418.500 392.500l33-13.500M418.500 440.500l33 13.500M452.500 378.500h196v75h-196"/><path d="M452 375v82" stroke-width="2"/></g></svg>
            <div class="nav nav-2d"><svg class="n10"><use href="#n-close"/></svg><svg class="wheel2d" viewBox="0 0 28 28"><circle cx="12" cy="13" r="9.500" fill="#eee" stroke="#999da3" stroke-width="1.200"/><path d="M12 3.500h9.500V13" fill="none" stroke="#999da3"/><circle cx="12" cy="13" r="5" fill="#f8f8f8" stroke="#999da3" stroke-width="1.200"/><text x="27" y="25" text-anchor="end" class="t2d">2D</text></svg><svg class="arrow"><use href="#dn"/></svg><hr><svg class="n20"><use href="#n-zoom"/></svg><svg class="arrow"><use href="#dn"/></svg><svg class="n10 last"><use href="#n-opt"/></svg></div>
          </div>
          <div class="vbar"><svg class="chev"><use href="#chevup"/></svg><i class="mid-thumb"></i><svg class="chev"><use href="#chev"/></svg></div>
        </div>
        <div class="viewbar"><button class="scale-btn">1&nbsp; :&nbsp; 100</button>
          <div class="icons"><svg><use href="#v-detail"/></svg><svg><use href="#v-box"/></svg><svg><use href="#v-sun"/></svg><svg><use href="#v-shadow"/></svg><svg><use href="#v-crop"/></svg><svg><use href="#v-crops"/></svg><svg><use href="#v-glass"/></svg><svg><use href="#v-bulb"/></svg><svg><use href="#v-temp"/></svg><svg><use href="#v-cons"/></svg></div>
          <div class="hbar"><svg class="chev"><use href="#chevl"/></svg><i></i><svg class="chev"><use href="#chevr"/></svg></div><svg class="grip"><use href="#grip"/></svg></div>
      </div>
    </section>
    <section class="win active">
      <div class="win-title"><svg class="win-icon"><use href="#rvt"/></svg><h2>三维视图: {三维} - 项目1<svg class="cursor"><use href="#ptr"/></svg></h2>
        <button aria-label="最小化"><svg viewBox="0 0 10 10"><path d="M1 6h9v3H1z" fill="#111"/></svg></button><button aria-label="最大化"><svg viewBox="0 0 10 10"><path d="M1 2h8v6H1z" fill="none" stroke="#111" stroke-width="2"/></svg></button><button class="close" aria-label="关闭"><svg viewBox="0 0 10 10"><path d="M1 1l8 8M9 1L1 9" stroke="#111" stroke-width="2.200"/></svg></button></div>
      <div class="client">
        <div class="view">
          <div class="canvas">
            <svg class="draw" viewBox="752 190 496 475">
              <g stroke="#0000f0" stroke-width="1.200" stroke-linejoin="round">
                <path d="M946 368L1173 291.500 1240.500 330 1014 407z" fill="#8e8e8e"/><path d="M1014 407l226.500-77v64L1014 471z" fill="#747678"/>
                <path d="M919 389l25-20 69 39-50 7z" fill="#8e8e8e"/><path d="M963 415l50-7v65l-50 5z" fill="#616266"/><path d="M963 446l49-6"/>
                <path d="M793.500 432.500L917 390l44 25-124 42z" fill="#8e8e8e"/><path d="M837 457l124-42v64.500L837 520z" fill="#747678"/><path d="M793.500 432.500L837 457v63l-43.500-25z" fill="#333"/>
                <path d="M941 364.500l74 42v70.500l-7-4h4v-64l-71-40z" fill="#333"/><path d="M915 385l48 27.500V483l-6-4h3v-63l-45-25z" fill="#333"/>
                <path d="M1014 408v68M961.500 414v68M941.500 366v5M915.500 386v5" stroke-width="2.400"/>
              </g>
              <g stroke="#b4b6b9" fill="none"><ellipse cx="1187" cy="269" rx="43" ry="23" stroke-dasharray="3 1" fill="#f4f4f4"/><ellipse cx="1187" cy="268" rx="33" ry="17" stroke-dasharray="3 1" fill="#fbfbfb"/><ellipse cx="1187" cy="269" rx="21" ry="9" fill="#d6d6d6" stroke="none"/>
                <path d="M1147 279l4 5M1149 277l5 7M1146 283l10-5M1153 276l3 7M1209 281l5 7M1213 280l1 9M1207 285l11-1M1217 281l-7 7M1161 249l3 6M1159 254l5-3M1211 253l8 3M1213 257l5-6M1216 251l3 7" stroke="#999ba0" stroke-width="1.200"/></g>
              <g stroke="#8b8d91" stroke-linejoin="round"><path d="M1164 234.500l25-7.500 22 9-27 9z" fill="#f0f0f1"/><path d="M1164 234.500l20 10.500v30l-18-13z" fill="#e6e7ea"/><path d="M1184 245l27-9-3 28-24 11z" fill="#dedfe6"/>
              <path d="M1182 233l4 3M1186 232l5 3M1184 238l7-3M1170 247l9 6M1170 252v8M1174 248v8M1171 256l8 6M1178 253v8M1191 251v13M1191 252l5-2M1194 255v8M1198 249v12M1203 247l-1 13M1199 250l5-2M1201 253v7" fill="none" stroke="#adafb3"/></g>
            </svg>
            <div class="nav nav-3d"><svg class="n10"><use href="#n-close"/></svg><svg class="wheel3d"><use href="#n-wheel"/></svg><svg class="arrow"><use href="#dn"/></svg><hr><svg class="n20"><use href="#n-zoom"/></svg><svg class="arrow"><use href="#dn"/></svg><svg class="n10 last"><use href="#n-opt"/></svg></div>
          </div>
          <div class="vbar"><svg class="chev"><use href="#chevup"/></svg><i class="mid-thumb"></i><svg class="chev"><use href="#chev"/></svg></div>
        </div>
        <div class="viewbar"><button class="scale-btn">1&nbsp; :&nbsp; 100</button>
          <div class="icons"><svg><use href="#v-detail"/></svg><svg><use href="#v-boxb"/></svg><svg><use href="#v-sun"/></svg><svg><use href="#v-shadow"/></svg><svg><use href="#v-render"/></svg><svg><use href="#v-crop"/></svg><svg><use href="#v-crops"/></svg><svg><use href="#v-lock"/></svg><svg><use href="#v-glass"/></svg><svg><use href="#v-bulb"/></svg><svg><use href="#v-temp"/></svg><svg><use href="#v-disp"/></svg><svg><use href="#v-cons"/></svg></div>
          <div class="hbar"><svg class="chev"><use href="#chevl"/></svg><i></i><svg class="chev"><use href="#chevr"/></svg></div><svg class="grip"><use href="#grip"/></svg></div>
      </div>
    </section>
  </div>
</main>

<footer class="status">
  <span class="hint">缩放图纸大小</span>
  <svg><use href="#t-ws"/></svg>
  <div class="combo ws"><select aria-label="工作集"><option></option></select><svg class="chev"><use href="#chev"/></svg></div>
  <button class="st req"><svg><use href="#t-req"/></svg>:0</button>
  <button class="st opt"><svg><use href="#t-opt"/></svg></button>
  <button class="st"><svg><use href="#t-add"/></svg></button>
  <div class="combo model"><select aria-label="设计选项" disabled><option>主模型</option></select><svg class="chev"><use href="#chev"/></svg></div>
  <div class="sel">
    <button class="st"><svg><use href="#t-link"/></svg></button><button class="st"><svg><use href="#t-under"/></svg></button><button class="st"><svg><use href="#t-pin"/></svg></button><button class="st"><svg><use href="#t-face"/></svg></button><button class="st"><svg><use href="#t-drag"/></svg></button><button class="st"><svg><use href="#t-filter"/></svg>:0</button>
  </div>
</footer>
</body>
</html>
```

FILE: styles.css
```css
* { box-sizing: border-box; }
body {
  margin: 0;
  height: 100vh;
  display: flex;
  flex-direction: column;
  overflow: hidden;
  background: #f1efef;
  color: #1c1f24;
  font: 12px/15px "Noto Sans", "Noto Sans CJK SC", sans-serif;
}
button, select, input { font: inherit; color: inherit; }
button { background: none; border: 0; padding: 0; margin: 0; white-space: nowrap; }
svg { display: block; flex: none; }
.defs { position: absolute; width: 0; height: 0; }
.arrow { width: 5px; height: 3px; }
.arrow.lg { width: 7px; height: 4px; }
.chev { width: 9px; height: 9px; }
.combo { position: relative; display: flex; }
.combo select {
  appearance: none;
  width: 100%;
  border: 0;
  border-radius: 0;
  padding: 0;
  background: #fbfbfb;
  opacity: 1;
}
.combo > svg { position: absolute; right: 4px; top: 50%; margin-top: -4px; pointer-events: none; }

/* title bar and tabs */
.top {
  display: grid;
  grid-template: 18px 20px / 36px minmax(0, 1fr);
  background: #9c9d9c;
  overflow: hidden;
  flex: none;
}
.app {
  grid-row: 1 / 3;
  margin: 0 0 3px;
  display: flex;
  align-items: center;
  justify-content: space-between;
  padding-right: 3px;
  background: linear-gradient(#b9bac0, #8b8b8c);
  border: solid #222;
  border-width: 0 1px 1px 0;
}
.app-r { width: 24px; height: 26px; align-self: flex-start; }
.app .arrow { width: 7px; height: 4px; align-self: center; }
.titlebar {
  display: flex;
  height: 26px;
  margin-top: -8px;
  border-bottom: 1px solid #77797c;
  background: #cdced2;
}
.type-combo { width: 214px; border-left: 5px solid #cdced2; }
.type-combo select { padding-left: 4px; }
.type-combo > svg { width: 7px; height: 4px; margin-top: 0; right: 2px; }
.qat { display: flex; align-items: center; width: 453px; padding-left: 1px; border-right: 1px solid #77797c; }
.q { width: 24px; height: 26px; display: flex; align-items: center; justify-content: center; }
.q svg { width: 16px; height: 16px; }
.q.on { background: #a9d0f2; border: 2px solid #1664b4; height: 24px; }
.q.help svg { width: 18px; height: 18px; }
.qa { width: 12px; height: 26px; display: flex; align-items: center; justify-content: center; }
.sep { width: 6px; height: 26px; border-left: 1px solid #a2a4a8; margin-left: 2px; margin-right: -2px; }
.doc-title { width: 171px; text-align: center; background: #8fcdf2; line-height: 21px; font-size: 14px; padding-left: 12px; }
.info { width: 276px; display: flex; align-items: center; border: solid #77797c; border-width: 0 1px; padding-left: 5px; }
.back { width: 4px; height: 8px; margin-right: 2px; }
.login { display: flex; align-items: center; gap: 4px; padding-left: 5px; }
.login svg { width: 16px; height: 16px; }
.push { margin-left: auto; }
.sys { flex: 1; display: flex; background: #8fcdf2; padding-left: 26px; }
.sys button { width: 27px; height: 14px; display: flex; align-items: center; justify-content: center; }
.sys svg { width: 10px; height: 10px; }
.sys .sys-close { flex: 1; background: #6fa6c4; }
.tabs { display: flex; padding: 3px 0 0 4px; }
.tab { padding: 0 10px; height: 17px; line-height: 15px; color: #17191c; }
.tab.latin { padding: 0 8px; }
.tab.active { background: #f7f7f8; border-radius: 2px 2px 0 0; padding: 0 9px; margin-right: 2px; }
.collapse { display: flex; align-items: center; gap: 4px; margin-left: 18px; height: 15px; }
.pill { width: 15px; height: 9px; }

/* ribbon */
.ribbon {
  flex: none;
  display: flex;
  height: 94px;
  margin-bottom: 28px;
  background: linear-gradient(#f2f2f4, #c9cacc 50%, #a2a2a2);
  border-bottom: 1px solid #cfd1d4;
}
.panel { display: flex; flex-direction: column; background: #fbfbfb; border-right: 2px solid #c4c7cd; flex: none; }
.panel-body { flex: 1; display: flex; padding-left: 2px; }
.panel-label {
  height: 17px;
  display: flex;
  align-items: center;
  justify-content: center;
  gap: 7px;
  background: #eff0f2;
  border-top: 1px solid #d3dbe0;
}
.p-select { width: 46px; }
.p-select .panel-label { justify-content: flex-start; padding-left: 2px; }
.p-build { width: 454px; }
.p-stairs { width: 96px; }
.p-model { width: 87px; }
.p-room { width: 199px; }
.p-open { width: 148px; }
.p-datum { width: 61px; }
.p-plane { width: 124px; border-right: 0; }
.big { display: flex; flex-direction: column; align-items: center; padding-top: 5px; height: 76px; line-height: 15px; }
.big > svg { width: 32px; height: 32px; }
.big > span { margin-top: 4px; }
.big > .arrow { width: 5px; height: 3px; margin-top: 3px; }
.w36 { width: 36px; }
.w40 { width: 40px; }
.w44 { width: 44px; }
.big.modify { width: 38px; height: 72px; margin-top: 3px; padding-top: 7px; background: #b4d5f0; border: 1px solid #1664b4; }
.big > .modify-ptr { width: 14px; height: 22px; }
.big.modify > span { margin-top: 8px; }
.stack { padding: 2px 0 0 5px; }
.stack.half { width: 96px; }
.stack.mid { padding-top: 14px; }
.small { display: flex; align-items: center; gap: 6px; height: 24px; }
.small > svg { width: 16px; height: 16px; }
.small > .arrow { width: 5px; height: 3px; margin-left: 1px; }
.small:disabled { color: #b0b2b5; }
.p-model .stack, .p-open .stack, .p-stairs .stack { padding-left: 4px; }
.p-open .small { gap: 5px; }

/* workspace */
.work { flex: 1; min-height: 0; display: flex; gap: 7px; }
.props { width: 214px; display: flex; flex-direction: column; min-height: 0; padding-bottom: 2px; }
.props-title {
  flex: none;
  height: 21px;
  padding-top: 1px;
  display: flex;
  justify-content: space-between;
  line-height: 17px;
  background: #c3d0de;
  background-clip: content-box;
  border-bottom: 2px solid #77797c;
  color: #3b4250;
}
.props-title span { margin-left: -1px; }
.props-title button { width: 18px; display: flex; align-items: center; justify-content: center; }
.props-title svg { width: 9px; height: 9px; }
.type-sel { flex: none; height: 69px; margin-top: 3px; display: flex; align-items: center; padding-right: 3px; background: #f6f6f7; border: solid #cfd1d5; border-width: 0 1px 1px 0; }
.thumb { width: 66px; height: 67px; display: flex; align-items: center; justify-content: center; border: 1px solid #cfd1d5; }
.thumb svg { width: 34px; height: 34px; }
.type-name { flex: 1; text-align: left; padding-left: 4px; color: #3b4250; }
.filter { flex: none; display: flex; height: 24px; margin-top: 2px; gap: 6px; }
.filter .combo { width: 131px; height: 23px; }
.filter select { background: #ececee; border: 1px solid #adafb2; border-left: 0; padding-left: 1px; }
.edit-type { display: flex; align-items: center; gap: 4px; height: 20px; }
.edit-type svg { width: 17px; height: 17px; }
.list { flex: 1; min-height: 0; display: flex; }
.list-view { width: 197px; overflow: hidden; background: #fbfbfb; }
.cat { display: flex; width: 100%; height: 17px; align-items: center; justify-content: space-between; background: #d9dade; padding-right: 6px; }
.cat svg { width: 8px; height: 9px; }
.grid { width: 100%; border-collapse: collapse; table-layout: fixed; }
.grid + .cat { height: 18px; }
.grid th, .grid td { height: 18px; padding: 0 0 0 2px; line-height: 15px; font-weight: 400; text-align: left; white-space: nowrap; overflow: hidden; border-bottom: 1px dotted #666; border-right: 1px dotted #666; }
.grid th { width: 97px; padding-left: 5px; }
.grid td.tight { padding: 0; }
.grid .dim { color: #85878a; }
.scale { display: block; width: 100%; height: 17px; border: 1px solid #111; padding: 0 3px; background: #fff; outline: 0; border-radius: 0; }
.cell-btn { display: block; width: 98px; height: 16px; line-height: 14px; background: #ececee; border: 1px solid #aeb0b4; border-right-width: 2px; border-bottom-width: 2px; }
.grid input[type="checkbox"] { appearance: none; display: block; width: 13px; height: 13px; margin: 3px 0 0; border: 1px solid #555; background: #fff; }
.vbar { width: 15px; flex: none; display: flex; flex-direction: column; align-items: center; padding: 5px 0; background: #f1efef; }
.props .vbar { margin-left: 1px; padding: 4px 0 4px; }
.prop-thumb { width: 15px; height: 196px; background: #cdcdcf; margin: 4px 0 auto; }
.props-foot { flex: none; display: flex; justify-content: space-between; height: 22px; padding: 2px 2px 0 0; }
.props-foot a { color: #1464c8; line-height: 19px; }
.props-foot button { width: 73px; height: 19px; border: 1px solid #cfd1d4; color: #85878a; }

.mdi { flex: 1; min-width: 0; display: grid; grid-template-columns: minmax(0, 524fr) minmax(0, 523fr); border-top: 2px solid #707478; margin-bottom: 2px; }
.win { display: flex; flex-direction: column; min-height: 0; border: solid #555b63; border-width: 0 1px 1px 2px; padding: 0 5px 3px 4px; background: #c3d0de; }
.win.active { background: #6cacf4; border-right: 0; }
.win-title { flex: none; height: 27px; display: flex; align-items: center; gap: 2px; padding-left: 1px; padding-top: 2px; }
.win-title button { width: 31px; height: 18px; display: flex; align-items: center; justify-content: center; border: 1px solid #4c535d; }
.win-title button svg { width: 11px; height: 10px; }
.win-title .close { background: #c4544c; }
.win-title button:last-child { margin-right: -1px; }
.win-icon { width: 16px; height: 16px; }
.rvt-text { font: bold 7px "Liberation Sans", sans-serif; fill: #fff; }
.win-title h2 { position: relative; margin: 0; margin-right: auto; padding-left: 1px; font-size: 15px; line-height: 20px; font-weight: 400; color: #2a3340; white-space: nowrap; }
.cursor { position: absolute; left: 130px; top: 6px; width: 14px; height: 20px; }
.client { flex: 1; min-height: 0; display: flex; flex-direction: column; border: solid #5f656d; border-width: 1px 0 0 1px; }
.view { flex: 1; min-height: 0; display: flex; background: #fbfbfb; }
.canvas { flex: 1; min-width: 0; position: relative; }
.draw { width: 100%; height: 100%; }
.mid-thumb { width: 15px; height: 17px; background: #c9c9cb; margin: auto 0; }
.viewbar { flex: none; height: 18px; display: flex; align-items: center; padding: 0 0 2px 21px; background: #f1efef; }
.scale-btn { width: 58px; text-align: left; }
.icons { display: flex; gap: 5px; }
.icons svg { width: 16px; height: 16px; }
.hbar { flex: 1; display: flex; align-items: center; padding: 0 2px 0 6px; }
.hbar i { width: 17px; height: 15px; background: #c9c9cb; margin: 0 auto; }
.grip { width: 10px; height: 10px; margin-left: 10px; align-self: flex-end; }
.nav { position: absolute; right: 1px; width: 35px; height: 116px; display: flex; flex-direction: column; align-items: center; border: 2px solid #bcbfc6; border-radius: 5px; background: rgba(240, 240, 240, 0.4); }
.nav-2d { top: 1px; }
.nav-3d { top: 115px; }
.nav .n10 { width: 10px; height: 10px; align-self: flex-end; margin-right: 1px; }
.nav .last { margin-top: auto; margin-bottom: 1px; }
.nav .n20 { width: 20px; height: 20px; }
.nav .arrow { margin: 5px 0; opacity: 0.6; }
.nav hr { width: 26px; margin: 0 0 6px; border: 0; border-top: 1px solid #a0a3a8; }
.wheel2d { width: 28px; height: 28px; margin-top: 5px; }
.wheel3d { width: 26px; height: 26px; margin-top: 7px; }
.t2d { font: bold 10px "Liberation Sans", sans-serif; fill: #8296c4; }

/* status bar */
.status { flex: none; height: 19px; display: flex; align-items: center; padding-top: 9px; background: #dcdcde; border-top: 1px solid #77797c; overflow: hidden; }
.status svg { width: 18px; height: 18px; }
.status .chev { width: 9px; height: 9px; opacity: 0.5; }
.status .combo { height: 20px; }
.hint { width: 372px; }
.ws { width: 205px; margin-left: 7px; }
.st { display: flex; align-items: center; width: 26px; height: 20px; }
.st.req { width: 54px; margin-left: 8px; gap: 2px; }
.opt { margin-left: -1px; }
.model { width: 156px; margin-left: -3px; }
.model select { padding-left: 3px; color: #85878a; }
.sel { display: flex; margin: 0 80px 0 auto; }
.sel .st:last-child { width: auto; }
```
